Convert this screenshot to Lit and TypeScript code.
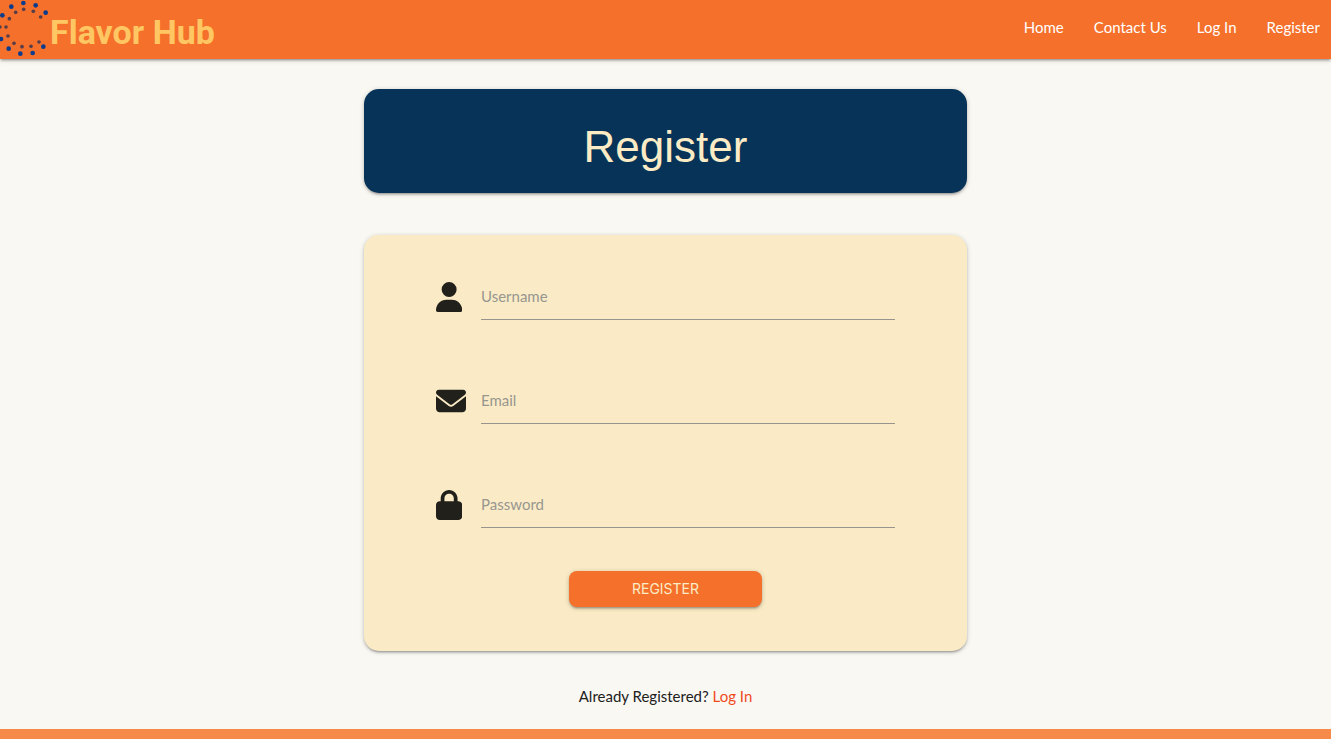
import { LitElement, html, css, svg } from "lit";
import { customElement } from "lit/decorators.js";

const icons = {
  user: svg`<svg viewBox="0 0 448 512" aria-hidden="true"><path d="M224 256A128 128 0 1 0 224 0a128 128 0 1 0 0 256zm-45.700 48C79.800 304 0 383.800 0 482.300C0 498.700 13.300 512 29.700 512H418.300c16.400 0 29.700-13.300 29.700-29.700C448 383.800 368.200 304 269.700 304H178.300z"/></svg>`,
  envelope: svg`<svg viewBox="0 0 512 512" aria-hidden="true"><path d="M48 64C21.500 64 0 85.500 0 112c0 15.100 7.100 29.300 19.200 38.400L236.800 313.600c11.400 8.500 27 8.500 38.400 0L492.800 150.400c12.100-9.100 19.200-23.300 19.200-38.400c0-26.500-21.500-48-48-48H48zM0 176V384c0 35.300 28.700 64 64 64H448c35.300 0 64-28.700 64-64V176L294.400 339.200c-22.800 17.100-54 17.100-76.800 0L0 176z"/></svg>`,
  lock: svg`<svg viewBox="0 0 448 512" aria-hidden="true"><path d="M144 144v48H304V144c0-44.200-35.800-80-80-80s-80 35.800-80 80zM80 192V144C80 64.500 144.500 0 224 0s144 64.500 144 144v48h16c35.300 0 64 28.700 64 64V448c0 35.300-28.700 64-64 64H64c-35.300 0-64-28.700-64-64V256c0-35.300 28.700-64 64-64H80z"/></svg>`,
};

const outerDots = [[70, 9], [107, 16], [137, 38], [130, 140], [98, 159], [61, 161], [26, 146], [3, 117], [7, 46], [34, 20]];
const innerDots = [[71, 28], [100, 34], [122, 51], [117, 126], [93, 139], [66, 140], [42, 130], [24, 108], [18, 81], [0, 81], [28, 56], [47, 37]];

const fields = [
  { id: "username", label: "Username", type: "text", icon: icons.user },
  { id: "email", label: "Email", type: "email", icon: icons.envelope },
  { id: "password", label: "Password", type: "password", icon: icons.lock },
];

@customElement("app-root")
export class AppRoot extends LitElement {
  static styles = css`
    :host {
      display: flex;
      flex-direction: column;
      min-height: 100vh;
      background: #f9f8f3;
      color: #21201b;
      font: 15px/22px Lato, "Open Sans", sans-serif;
      --shadow: 0 2px 2px 0 rgba(0, 0, 0, 0.14), 0 3px 1px -2px rgba(0, 0, 0, 0.12), 0 1px 5px 0 rgba(0, 0, 0, 0.2);
    }
    * {
      box-sizing: border-box;
    }
    a {
      text-decoration: none;
    }
    .header {
      display: flex;
      justify-content: space-between;
      align-items: center;
      background: #f5702b;
      box-shadow: var(--shadow);
      height: 59px;
    }
    .brand {
      display: flex;
      align-items: center;
      gap: 2px;
      color: #ffc763;
      font: 700 34px/53px Roboto, sans-serif;
    }
    .mark {
      width: 48px;
      height: 59px;
    }
    .outer {
      fill: #0a3b8c;
    }
    .inner {
      fill: #573d48;
    }
    .brand-name {
      padding-top: 6px;
    }
    .links {
      display: flex;
      gap: 30px;
      margin: 0;
      padding: 0 11px 6px 0;
      list-style: none;
    }
    .links a {
      color: #fff;
    }
    .main {
      flex: 1;
      display: flex;
      flex-direction: column;
      width: 100%;
      max-width: 603px;
      margin: 0 auto;
      padding: 30px 0 20px;
    }
    .title {
      margin: 0 0 42px;
      padding: 34px 0 22px;
      border-radius: 15px;
      background: #083358;
      color: #fbecc6;
      box-shadow: var(--shadow);
      font: 400 44px/48px "Liberation Sans", sans-serif;
      text-align: center;
    }
    .card {
      display: flex;
      flex-direction: column;
      gap: 58px;
      padding: 39px 72px 44px;
      border-radius: 15px;
      background: #faebc6;
      box-shadow: var(--shadow);
    }
    .field {
      display: grid;
      grid-template-columns: 45px 1fr;
      align-items: center;
    }
    .icon svg {
      display: block;
      height: 30px;
      fill: #21201b;
    }
    .field input {
      grid-area: 1 / 2;
      width: 100%;
      height: 46px;
      padding: 0;
      border: 0;
      border-bottom: 1px solid #96948d;
      outline: 0;
      background: transparent;
      color: inherit;
      font: inherit;
    }
    .field label {
      grid-area: 1 / 2;
      padding-bottom: 2px;
      color: #97968f;
      pointer-events: none;
    }
    .field input:focus + label,
    .field input:not(:placeholder-shown) + label {
      transform: translateY(-22px);
    }
    .submit {
      width: 42%;
      height: 36px;
      margin: -15px auto 0;
      padding: 0;
      border: 0;
      border-radius: 8px;
      background: #f5702b;
      color: #fbecc6;
      box-shadow: var(--shadow);
      font: 400 14px/36px Inter, sans-serif;
      text-transform: uppercase;
      cursor: pointer;
    }
    .prompt {
      margin: 34px 0 0;
      text-align: center;
    }
    .prompt a {
      color: #f04a1c;
    }
    .footer {
      height: 10px;
      background: #f68a4a;
    }
  `;

  render() {
    return html`
      <header class="header">
        <a class="brand" href="#">
          <svg class="mark" viewBox="0 0 144 177" aria-hidden="true">
            ${outerDots.map(([x, y]) => svg`<circle class="outer" cx=${x} cy=${y} r="7"/>`)}
            ${innerDots.map(([x, y]) => svg`<circle class="inner" cx=${x} cy=${y} r="5.500"/>`)}
          </svg>
          <span class="brand-name">Flavor Hub</span>
        </a>
        <nav>
          <ul class="links">
            ${["Home", "Contact Us", "Log In", "Register"].map((t) => html`<li><a href="#">${t}</a></li>`)}
          </ul>
        </nav>
      </header>
      <main class="main">
        <h1 class="title">Register</h1>
        <form class="card">
          ${fields.map(
            (f) => html`<div class="field">
              <span class="icon">${f.icon}</span>
              <input id=${f.id} type=${f.type} placeholder=" " />
              <label for=${f.id}>${f.label}</label>
            </div>`
          )}
          <button class="submit" type="submit">Register</button>
        </form>
        <p class="prompt">Already Registered? <a href="#">Log In</a></p>
      </main>
      <footer class="footer"></footer>
    `;
  }
}
